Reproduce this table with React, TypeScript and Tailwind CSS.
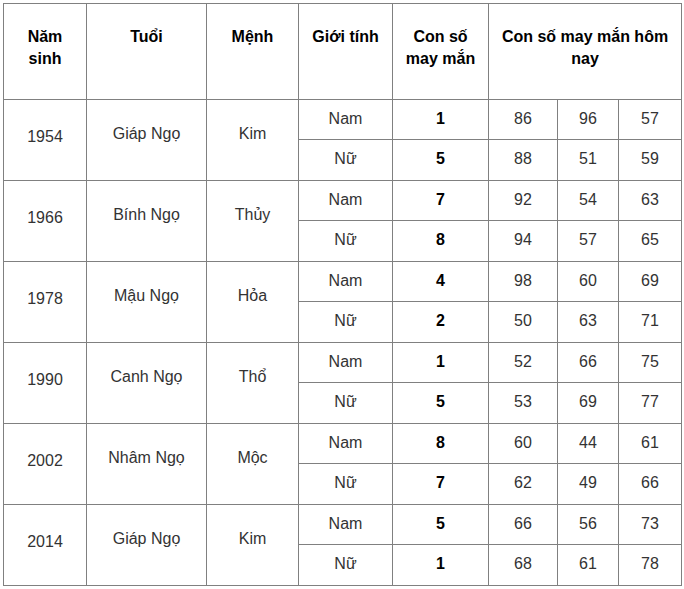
import React from "react";

type Row = {
  year: string;
  tuoi: string;
  menh: string;
  nam: { so: string; hom: [string, string, string] };
  nu: { so: string; hom: [string, string, string] };
};

const rows: Row[] = [
  { year: "1954", tuoi: "Giáp Ngọ", menh: "Kim", nam: { so: "1", hom: ["86", "96", "57"] }, nu: { so: "5", hom: ["88", "51", "59"] } },
  { year: "1966", tuoi: "Bính Ngọ", menh: "Thủy", nam: { so: "7", hom: ["92", "54", "63"] }, nu: { so: "8", hom: ["94", "57", "65"] } },
  { year: "1978", tuoi: "Mậu Ngọ", menh: "Hỏa", nam: { so: "4", hom: ["98", "60", "69"] }, nu: { so: "2", hom: ["50", "63", "71"] } },
  { year: "1990", tuoi: "Canh Ngọ", menh: "Thổ", nam: { so: "1", hom: ["52", "66", "75"] }, nu: { so: "5", hom: ["53", "69", "77"] } },
  { year: "2002", tuoi: "Nhâm Ngọ", menh: "Mộc", nam: { so: "8", hom: ["60", "44", "61"] }, nu: { so: "7", hom: ["62", "49", "66"] } },
  { year: "2014", tuoi: "Giáp Ngọ", menh: "Kim", nam: { so: "5", hom: ["66", "56", "73"] }, nu: { so: "1", hom: ["68", "61", "78"] } },
];

const th = "border border-[#808080] px-2 pt-[22px] align-top text-center font-bold text-black leading-[22px]";
const td = "border border-[#808080] px-2 pb-[2px] text-center align-middle text-[#333] leading-[22px]";
const tdBold = "border border-[#808080] px-2 pb-[2px] text-center align-middle font-bold text-black leading-[22px]";

export default function App() {
  return (
    <div className="min-h-screen bg-white p-[3px] font-['Liberation_Sans',Arial,sans-serif] text-[16px]">
      <table className="w-[678px] table-fixed border-collapse">
        <colgroup>
          <col className="w-[83px]" />
          <col className="w-[120px]" />
          <col className="w-[92px]" />
          <col className="w-[94px]" />
          <col className="w-[96px]" />
          <col className="w-[69px]" />
          <col className="w-[61px]" />
          <col className="w-[63px]" />
        </colgroup>
        <thead>
          <tr className="h-[96px]">
            <th className={th}>Năm sinh</th>
            <th className={th}>Tuổi</th>
            <th className={th}>Mệnh</th>
            <th className={th}>Giới tính</th>
            <th className={th}>Con số may mắn</th>
            <th className={th} colSpan={3}>
              Con số may mắn hôm nay
            </th>
          </tr>
        </thead>
        <tbody>
          {rows.map((r) => (
            <React.Fragment key={r.year}>
              <tr className="h-[40px]">
                <td className={`${td} pb-[6px]`} rowSpan={2}>
                  {r.year}
                </td>
                <td className={`${td} pb-[12px]`} rowSpan={2}>
                  {r.tuoi}
                </td>
                <td className={`${td} pb-[12px]`} rowSpan={2}>
                  {r.menh}
                </td>
                <td className={td}>Nam</td>
                <td className={tdBold}>{r.nam.so}</td>
                {r.nam.hom.map((n, i) => (
                  <td key={i} className={td}>
                    {n}
                  </td>
                ))}
              </tr>
              <tr className="h-[41px]">
                <td className={td}>Nữ</td>
                <td className={tdBold}>{r.nu.so}</td>
                {r.nu.hom.map((n, i) => (
                  <td key={i} className={td}>
                    {n}
                  </td>
                ))}
              </tr>
            </React.Fragment>
          ))}
        </tbody>
      </table>
    </div>
  );
}
